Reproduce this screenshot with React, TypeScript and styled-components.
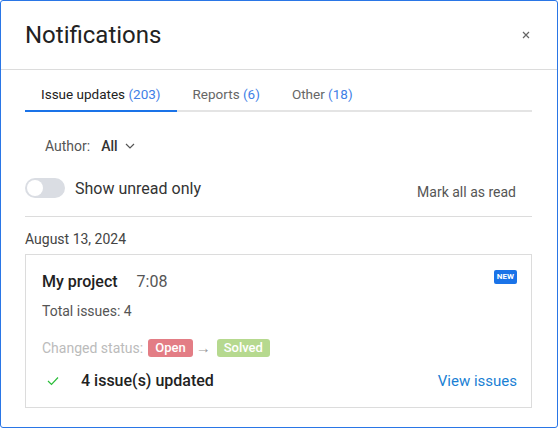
import React, { useState } from 'react';
import styled, { createGlobalStyle } from 'styled-components';

const GlobalStyle = createGlobalStyle`
  html, body {
    margin: 0;
    padding: 0;
    background: #ffffff;
  }
  body {
    font-family: Roboto, 'Liberation Sans', Arial, sans-serif;
    -webkit-font-smoothing: antialiased;
  }
  * {
    box-sizing: border-box;
  }
`;

type Tab = { label: string; count: number };

const tabs: Tab[] = [
  { label: 'Issue updates', count: 203 },
  { label: 'Reports', count: 6 },
  { label: 'Other', count: 18 },
];

export default function App() {
  const [active, setActive] = useState(0);
  const [unreadOnly, setUnreadOnly] = useState(false);

  return (
    <>
      <GlobalStyle />
      <Dialog>
        <Header>
          <Title>Notifications</Title>
          <CloseButton aria-label="Close">
            <svg width="8" height="8" viewBox="0 0 8 8">
              <path d="M1 1 L7 7 M7 1 L1 7" stroke="#666" strokeWidth="1.2" />
            </svg>
          </CloseButton>
        </Header>

        <Body>
          <TabList>
            {tabs.map((t, i) => (
              <TabButton key={t.label} $active={i === active} onClick={() => setActive(i)}>
                {t.label} <Count>({t.count})</Count>
              </TabButton>
            ))}
          </TabList>

          <FilterRow>
            <FilterLabel>Author:</FilterLabel>
            <FilterValue>All</FilterValue>
            <svg width="10" height="6" viewBox="0 0 10 6">
              <path d="M1 1 L5 5 L9 1" fill="none" stroke="#555" strokeWidth="1.2" />
            </svg>
          </FilterRow>

          <Toolbar>
            <ToggleLabel>
              <Switch $on={unreadOnly} onClick={() => setUnreadOnly(!unreadOnly)}>
                <Knob $on={unreadOnly} />
              </Switch>
              Show unread only
            </ToggleLabel>
            <MarkRead>Mark all as read</MarkRead>
          </Toolbar>

          <DateHeading>August 13, 2024</DateHeading>

          <Card>
            <CardTop>
              <ProjectName>My project</ProjectName>
              <Time>7:08</Time>
              <NewBadge>NEW</NewBadge>
            </CardTop>
            <Meta>Total issues: 4</Meta>
            <StatusRow>
              <StatusLabel>Changed status:</StatusLabel>
              <StatusPill $tone="open">Open</StatusPill>
              <Arrow>→</Arrow>
              <StatusPill $tone="solved">Solved</StatusPill>
            </StatusRow>
            <Footer>
              <Updated>
                <svg width="12" height="10" viewBox="0 0 12 10">
                  <path d="M1 5 L4.5 8.5 L11 1.5" fill="none" stroke="#2bbd3a" strokeWidth="1.2" />
                </svg>
                <UpdatedText>4 issue(s) updated</UpdatedText>
              </Updated>
              <ViewLink href="#">View issues</ViewLink>
            </Footer>
          </Card>
        </Body>
      </Dialog>
    </>
  );
}

const Dialog = styled.div`
  width: 558px;
  height: 428px;
  border: 1px solid #2a76e6;
  border-radius: 3px;
  background: #fff;
  overflow: hidden;
`;

const Header = styled.div`
  height: 69px;
  display: flex;
  align-items: center;
  justify-content: space-between;
  padding: 0 27px 0 24px;
  border-bottom: 1px solid #dcdcdc;
`;

const Title = styled.h1`
  margin: 0;
  font-size: 24px;
  font-weight: 400;
  color: #222;
  line-height: 1;
`;

const CloseButton = styled.button`
  border: none;
  background: none;
  padding: 0;
  display: flex;
  cursor: pointer;
`;

const Body = styled.div`
  padding: 0 25px 0 24px;
`;

const TabList = styled.div`
  display: flex;
  border-bottom: 2px solid #e4e4e4;
`;

const TabButton = styled.button<{ $active: boolean }>`
  border: none;
  background: none;
  font-family: inherit;
  font-size: 13.5px;
  font-weight: 400;
  color: ${(p) => (p.$active ? '#222' : '#666')};
  padding: 16px 16px 8px;
  margin-bottom: -2px;
  border-bottom: 2px solid ${(p) => (p.$active ? '#1a73e8' : 'transparent')};
  cursor: pointer;
`;

const Count = styled.span`
  color: #3f7fe6;
`;

const FilterRow = styled.div`
  display: flex;
  align-items: center;
  gap: 7px;
  padding: 26px 0 0 20px;
  font-size: 14px;
`;

const FilterLabel = styled.span`
  color: #555;
  margin-right: 4px;
`;

const FilterValue = styled.span`
  color: #333;
  font-weight: 500;
`;

const Toolbar = styled.div`
  display: flex;
  justify-content: space-between;
  align-items: center;
  padding: 22px 16px 16px 0;
  border-bottom: 1px solid #dcdcdc;
`;

const ToggleLabel = styled.label`
  display: flex;
  align-items: center;
  gap: 10px;
  font-size: 16px;
  color: #333;
`;

const Switch = styled.span<{ $on: boolean }>`
  width: 40px;
  height: 20px;
  border-radius: 10px;
  background: ${(p) => (p.$on ? '#1a73e8' : '#dadde3')};
  position: relative;
  cursor: pointer;
`;

const Knob = styled.span<{ $on: boolean }>`
  position: absolute;
  top: 2px;
  left: ${(p) => (p.$on ? '22px' : '2px')};
  width: 16px;
  height: 16px;
  border-radius: 50%;
  background: #fff;
`;

const MarkRead = styled.button`
  border: none;
  background: none;
  padding: 0;
  font-family: inherit;
  font-size: 14px;
  color: #555;
  cursor: pointer;
  margin-top: 8px;
`;

const DateHeading = styled.div`
  font-size: 14px;
  color: #444;
  padding: 14px 0 7px;
`;

const Card = styled.div`
  border: 1px solid #dcdcdc;
  padding: 15px 14px 17px 16px;
`;

const CardTop = styled.div`
  display: flex;
  align-items: center;
  gap: 19px;
  height: 24px;
  margin-top: -1px;
`;

const ProjectName = styled.span`
  font-size: 16px;
  font-weight: 500;
  color: #222;
`;

const Time = styled.span`
  font-size: 16px;
  color: #555;
`;

const NewBadge = styled.span`
  margin-left: auto;
  align-self: flex-start;
  margin-top: 1px;
  background: #1a73e8;
  color: #fff;
  font-size: 8px;
  font-weight: 700;
  padding: 2px 3px;
  border-radius: 2px;
  line-height: 10px;
`;

const Meta = styled.div`
  font-size: 14px;
  color: #555;
  margin-top: 10px;
`;

const StatusRow = styled.div`
  display: flex;
  align-items: center;
  gap: 5px;
  margin-top: 20px;
  font-size: 14px;
`;

const StatusLabel = styled.span`
  color: #bbb;
`;

const StatusPill = styled.span<{ $tone: 'open' | 'solved' }>`
  background: ${(p) => (p.$tone === 'open' ? '#e37d85' : '#b6d98f')};
  color: #fff;
  font-size: 13px;
  font-weight: 500;
  padding: 0 7px;
  border-radius: 3px;
  line-height: 18px;
`;

const Arrow = styled.span`
  color: #999;
  font-size: 15px;
  margin: 0 1px 0 -2px;
`;

const Footer = styled.div`
  display: flex;
  justify-content: space-between;
  align-items: center;
  margin-top: 14px;
`;

const Updated = styled.div`
  display: flex;
  align-items: center;
  gap: 22px;
  padding-left: 5px;
`;

const UpdatedText = styled.span`
  font-size: 16px;
  font-weight: 500;
  color: #222;
`;

const ViewLink = styled.a`
  font-size: 15px;
  color: #1a7fd4;
  text-decoration: none;
`;
